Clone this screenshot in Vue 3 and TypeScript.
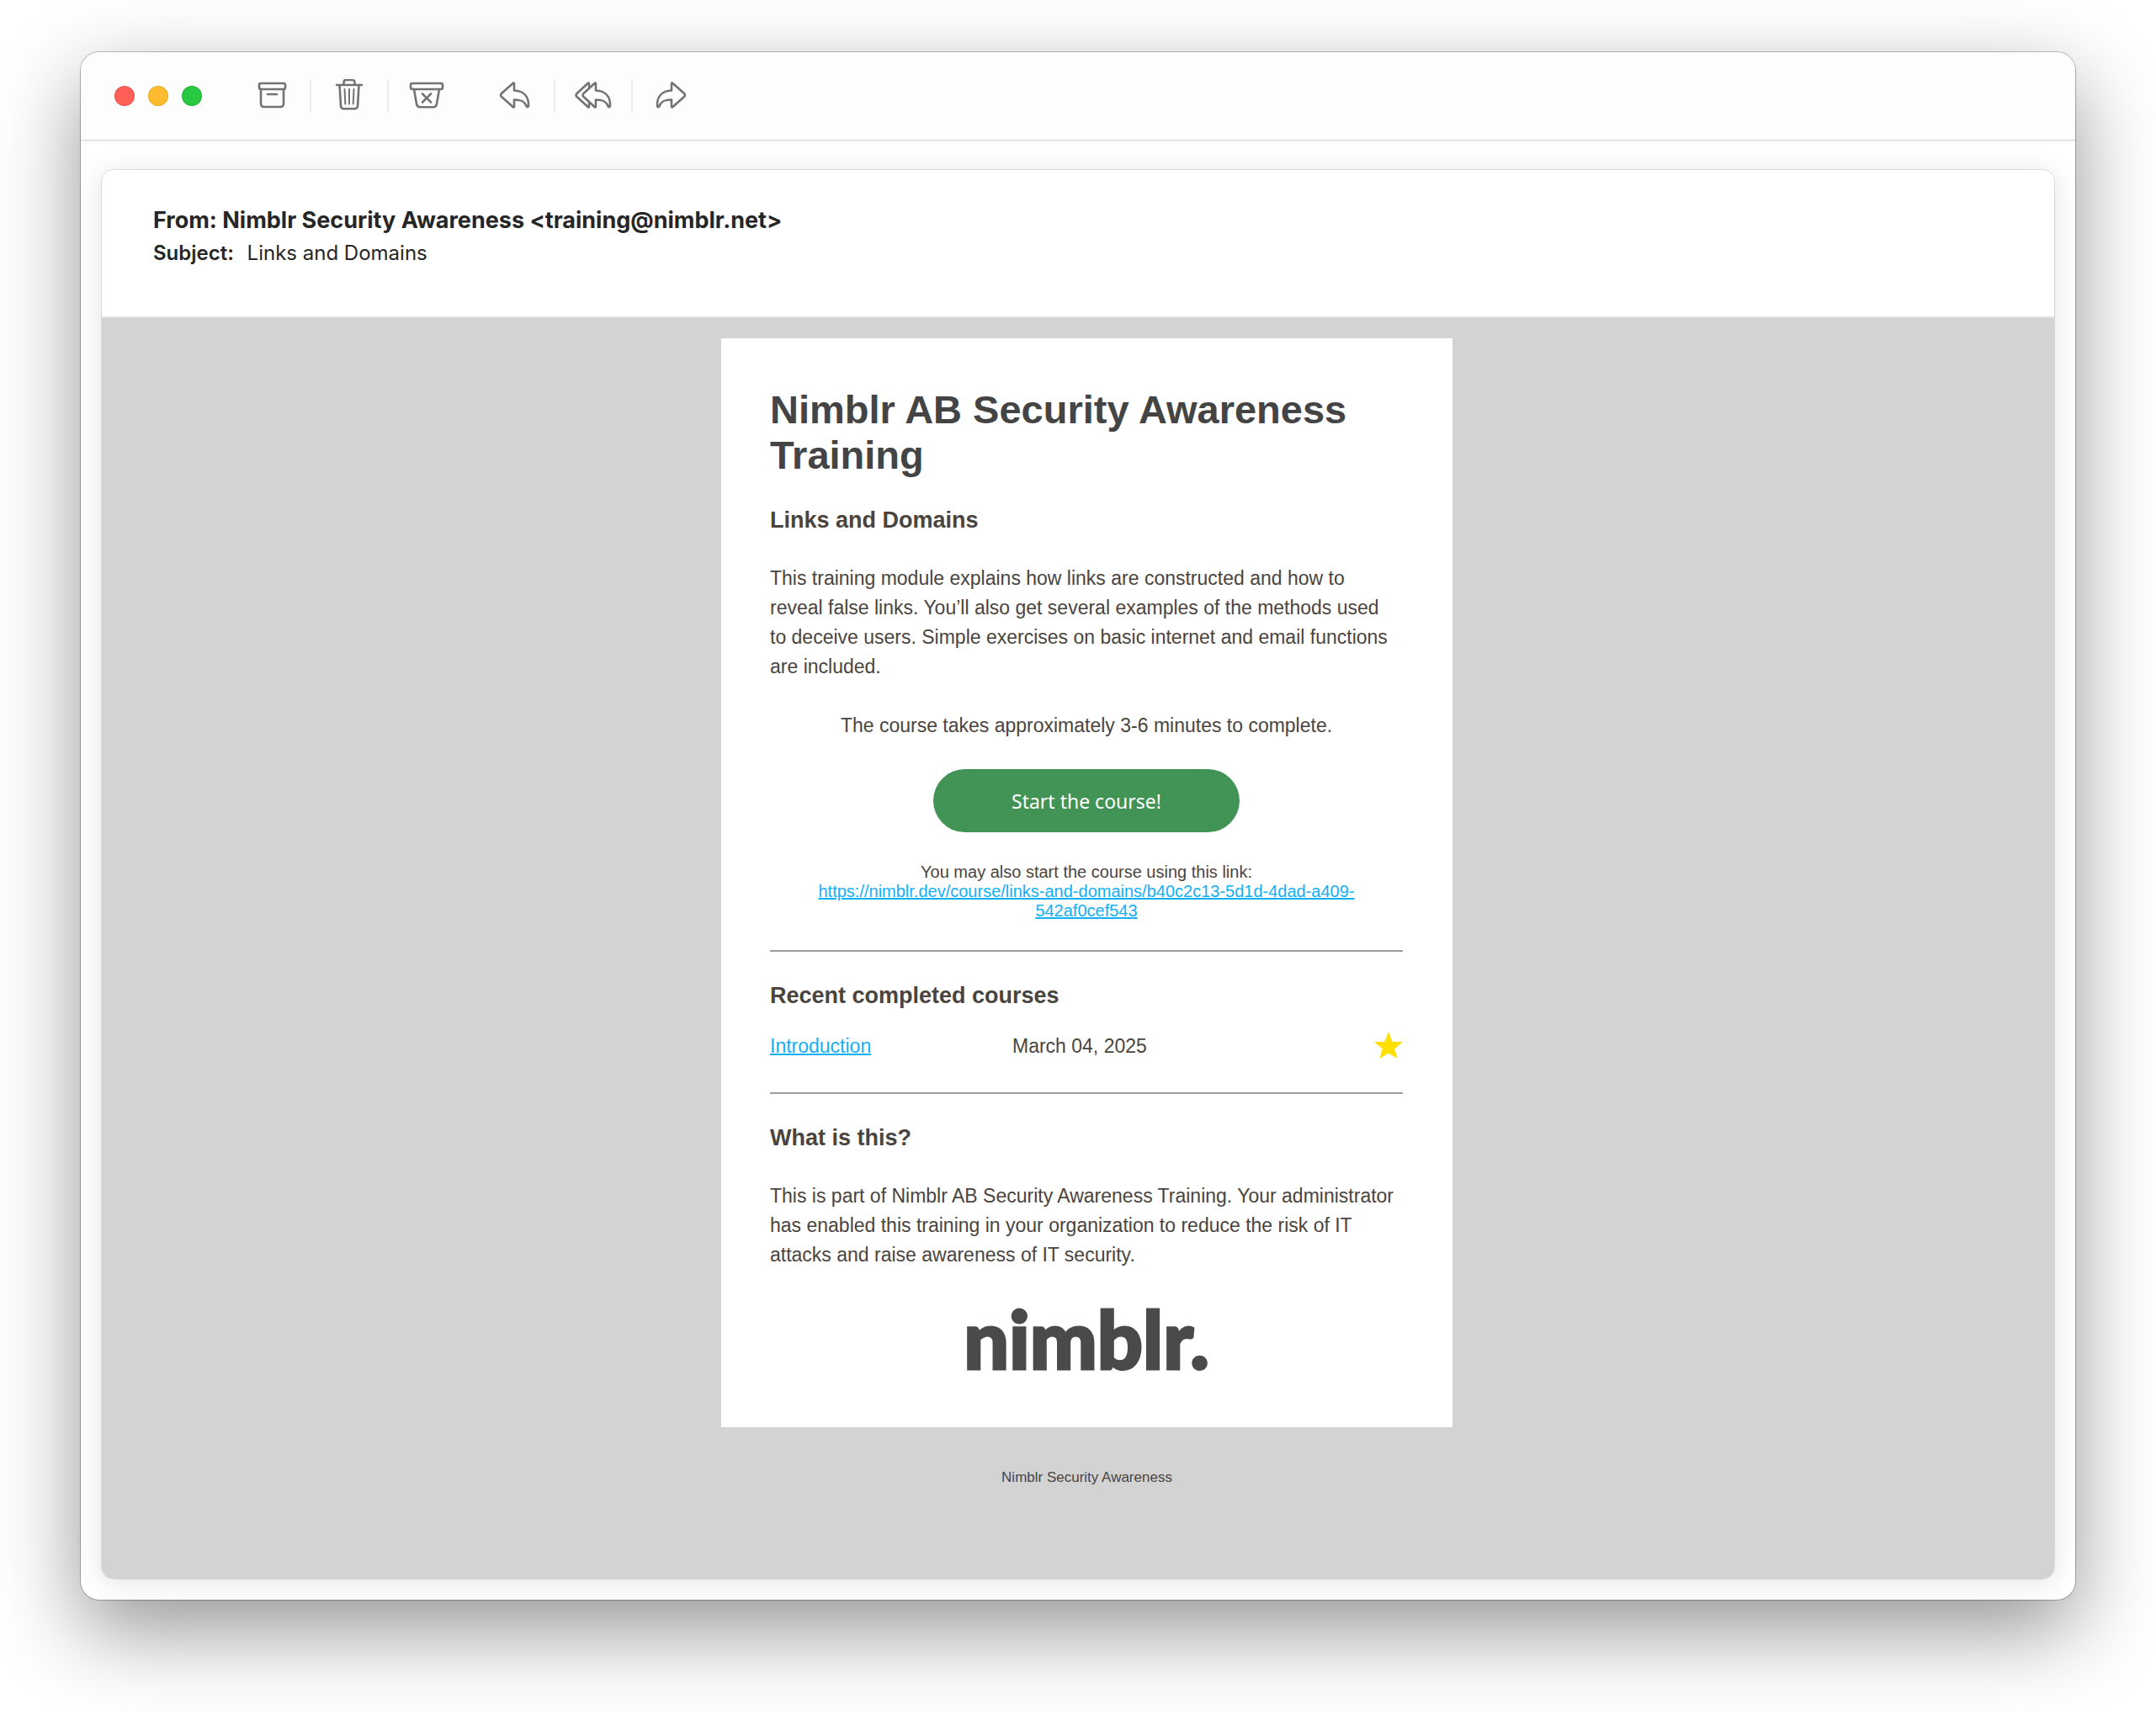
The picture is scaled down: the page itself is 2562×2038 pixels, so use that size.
<script setup lang="ts">
interface Course {
  name: string
  date: string
}

const sender = 'Nimblr Security Awareness'
const courseUrl = 'https://nimblr.dev/course/links-and-domains/b40c2c13-5d1d-4dad-a409-542af0cef543'
const courses: Course[] = [{ name: 'Introduction', date: 'March 04, 2025' }]
</script>

<template>
  <div class="desktop">
    <main class="window">
      <header class="toolbar">
        <div class="lights">
          <button class="light close" aria-label="Close"></button>
          <button class="light minimize" aria-label="Minimize"></button>
          <button class="light expand" aria-label="Zoom"></button>
        </div>
        <div class="group">
          <button class="tool" aria-label="Archive">
            <svg viewBox="0 0 48 40">
              <rect x="9" y="5" width="31" height="7" rx="2" />
              <path d="M11 12v17q0 4 4 4h19q4 0 4-4V12M19 18h11" />
            </svg>
          </button>
          <button class="tool" aria-label="Delete">
            <svg viewBox="0 0 48 40">
              <path d="M9 7h30M17.500 7V4q0-3 3-3h7q3 0 3 3v3M12.500 7l1.500 25q.3 3.300 3.500 3.300h13q3.200 0 3.500-3.300L35.500 7" />
              <path class="thin" d="M18.500 12l.8 17.500M24 12v17.500M29.500 12l-.8 17.500" />
            </svg>
          </button>
          <button class="tool" aria-label="Move to junk">
            <svg viewBox="0 0 48 40">
              <rect x="5" y="5" width="38" height="7" rx="2" />
              <path d="M9 12l3 17.500q.6 3.700 4 3.700h16q3.400 0 4-3.700L39 12M19 17.500l10 10M29 17.500l-10 10" />
            </svg>
          </button>
        </div>
        <div class="group">
          <button class="tool" aria-label="Reply">
            <svg viewBox="0 0 48 40">
              <path d="M22 5v8.500c11 .5 17.500 7 17 18.500q-1 2.500-2.500 0c-2-5.500-6-7.500-14.500-7.500V33q-.5 1-1.500 0L6.500 20.500q-1-1.500 0-3L20.500 5q1-1 1.500 0z" />
            </svg>
          </button>
          <button class="tool" aria-label="Reply all">
            <svg viewBox="0 0 48 40">
              <path d="M27 5v8.500c11 .5 17.500 7 17 18.500q-1 2.500-2.500 0c-2-5.500-6-7.500-14.500-7.500V33q-.5 1-1.500 0L12 20.500q-1-1.500 0-3L25.500 5q1-1 1.500 0z" />
              <path d="M19 10V5q-.5-1-1.500 0L4 17.500q-1 1.500 0 3L17.500 33q1 1 1.500 0v-5" />
            </svg>
          </button>
          <button class="tool" aria-label="Forward">
            <svg viewBox="0 0 48 40">
              <path d="M25 5v8.500c-11 .5-17.500 7-17 18.500q1 2.500 2.500 0c2-5.500 6-7.500 14.500-7.500V33q.5 1 1.500 0L40.500 20.500q1-1.500 0-3L26.500 5q-1-1-1.500 0z" />
            </svg>
          </button>
        </div>
      </header>

      <article class="message">
        <header class="headers">
          <p class="from">From: {{ sender }} &lt;training@nimblr.net&gt;</p>
          <p class="subject"><b>Subject:</b> <span>Links and Domains</span></p>
        </header>

        <div class="canvas">
          <section class="mail">
            <h1>Nimblr AB Security Awareness Training</h1>
            <h2>Links and Domains</h2>
            <p class="copy">
              This training module explains how links are constructed and how to reveal false links. You’ll also get
              several examples of the methods used to deceive users. Simple exercises on basic internet and email
              functions are included.
            </p>
            <p class="centered">The course takes approximately 3-6 minutes to complete.</p>
            <button class="start">Start the course!</button>
            <p class="centered small">
              You may also start the course using this link:<br />
              <a :href="courseUrl">{{ courseUrl }}</a>
            </p>
            <hr />
            <h2>Recent completed courses</h2>
            <table>
              <tbody>
                <tr v-for="course in courses" :key="course.name">
                  <td class="name"><a href="#">{{ course.name }}</a></td>
                  <td>{{ course.date }}</td>
                  <td class="award">
                    <svg viewBox="0 0 34 32" role="img" aria-label="Completed">
                      <path d="M17 0l4.500 11.700L34 12.300l-9.700 7.900L27.600 32 17 25.400 6.400 32l3.300-11.800L0 12.300l12.500-.6z" />
                    </svg>
                  </td>
                </tr>
              </tbody>
            </table>
            <hr />
            <h2>What is this?</h2>
            <p class="copy">
              This is part of Nimblr AB Security Awareness Training. Your administrator has enabled this training in
              your organization to reduce the risk of IT attacks and raise awareness of IT security.
            </p>
            <div class="logo">nimblr.</div>
          </section>
          <footer>{{ sender }}</footer>
        </div>
      </article>
    </main>
  </div>
</template>

<style>
body {
  margin: 0;
  background: #fff;
}
</style>

<style scoped>
.desktop {
  padding: 62px 96px 134px;
  overflow: hidden;
}
.window {
  padding-bottom: 25px;
  border-radius: 22px;
  background: #fff;
  box-shadow: 0 0 0 1px rgba(0, 0, 0, 0.24), 0 36px 100px rgba(0, 0, 0, 0.42);
}
.toolbar {
  display: flex;
  align-items: center;
  height: 104px;
  padding-left: 40px;
  border-bottom: 1px solid #d9d9d9;
  border-radius: 22px 22px 0 0;
  background: #fdfdfd;
  box-shadow: 0 2px 4px rgba(0, 0, 0, 0.06);
}
button {
  border: 0;
  padding: 0;
}
.lights {
  display: flex;
  gap: 16px;
  margin-right: 38px;
}
.light {
  width: 24px;
  height: 24px;
  border: 1px solid rgba(0, 0, 0, 0.1);
  border-radius: 50%;
}
.close {
  background: #ff5f57;
}
.minimize {
  background: #febc2e;
}
.expand {
  background: #28c840;
}
.group {
  display: flex;
  margin-right: 16px;
}
.tool {
  display: flex;
  align-items: center;
  justify-content: center;
  width: 90px;
  height: 40px;
  background: none;
}
.tool + .tool {
  box-sizing: content-box;
  border-left: 2px solid #ebebeb;
}
.tool svg {
  width: 48px;
  height: 40px;
  fill: none;
  stroke: #737373;
  stroke-width: 2.6;
  stroke-linecap: round;
  stroke-linejoin: round;
}
.tool .thin {
  stroke-width: 2;
}
.message {
  margin: 35px 25px 0;
  border-radius: 14px;
  background: #fff;
  box-shadow: 0 0 0 1px rgba(0, 0, 0, 0.1), 0 4px 32px rgba(0, 0, 0, 0.12);
}
.headers {
  padding: 41px 61px 55px;
  border-bottom: 2px solid #e2e2e2;
  color: #262626;
  font-family: Inter, sans-serif;
}
.headers p {
  margin: 0;
}
.from {
  font-size: 27px;
  font-weight: 700;
  line-height: 38px;
}
.subject {
  font-size: 24px;
  line-height: 40px;
}
.subject b {
  margin-right: 9px;
  font-weight: 600;
}
.canvas {
  padding: 24px 0 110px 21px;
  border-radius: 0 0 14px 14px;
  background: #d3d3d3;
  color: #4a443f;
  font-family: "Liberation Sans", Arial, sans-serif;
  font-size: 23px;
  line-height: 35px;
}
.mail {
  box-sizing: border-box;
  max-width: 869px;
  margin: 0 auto;
  padding: 58px 59px 60px 58px;
  background: #fff;
}
h1 {
  margin: 0 0 33px;
  color: #444;
  font-size: 47px;
  line-height: 54px;
}
h2 {
  margin: 0;
  font-size: 27px;
  line-height: 34px;
}
.mail p {
  margin: 35px 0;
}
.mail .copy {
  margin-right: 5px;
}
.mail .centered {
  margin-bottom: 34px;
  text-align: center;
}
.mail .small {
  margin: 36px 0 35px;
  font-size: 20px;
  line-height: 23px;
}
a {
  color: #12b0f5;
  text-decoration-thickness: 2px;
}
.start {
  display: block;
  width: 364px;
  height: 75px;
  margin: 0 auto;
  border-radius: 38px;
  background: #429356;
  color: #fff;
  font: 23px "Noto Sans", sans-serif;
}
hr {
  margin: 35px 0;
  border: 0;
  border-top: 2px solid #9e9e9e;
}
table {
  width: 100%;
  margin-top: 26px;
  border-collapse: collapse;
  table-layout: fixed;
}
td {
  padding: 0 0 2px;
}
.name {
  width: 288px;
}
.award {
  width: 34px;
  vertical-align: top;
}
.award svg {
  display: block;
  width: 34px;
  height: 32px;
  fill: #ffe000;
}
.logo {
  color: #4a4a4a;
  font-family: Lato, sans-serif;
  font-size: 95px;
  font-weight: 900;
  line-height: 92px;
  text-align: center;
  -webkit-text-stroke: 3px #4a4a4a;
}
footer {
  margin-top: 50px;
  font-size: 17px;
  line-height: 20px;
  text-align: center;
}
</style>
